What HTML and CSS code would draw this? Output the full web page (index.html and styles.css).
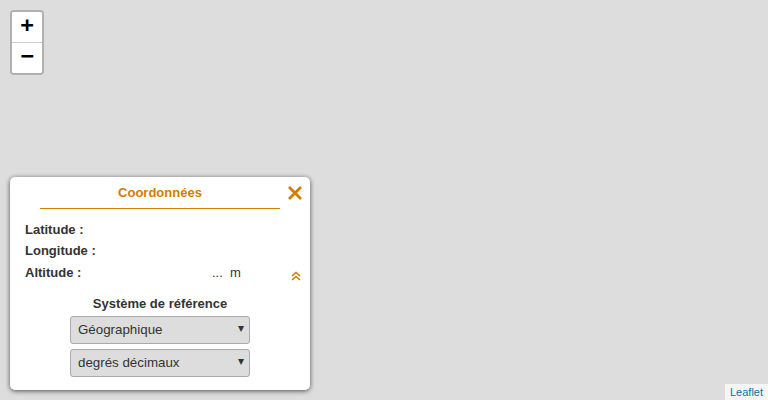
FILE: index.html
```html
<!DOCTYPE html>
<html lang="fr">
<head>
<meta charset="utf-8">
<link rel="stylesheet" href="styles.css">
</head>
<body>
<div class="map">
  <div class="zoom">
    <a class="zbtn zin">+</a>
    <a class="zbtn zout">−</a>
  </div>
  <div class="panel">
    <div class="title">Coordonnées</div>
    <div class="rule"></div>
    <span class="close">
      <svg width="16" height="16" viewBox="0 0 16 16"><path d="M2 2L14 14M14 2L2 14" stroke="#d27c00" stroke-width="2.8" fill="none"/></svg>
    </span>
    <div class="rows">
      <div class="row"><span class="lbl">Latitude :</span></div>
      <div class="row"><span class="lbl">Longitude :</span></div>
      <div class="row alt"><span class="lbl">Altitude :</span><span class="val">...&nbsp; m</span>
        <svg class="chev" width="10" height="10" viewBox="0 0 10 10"><path d="M1 5L5 1.5L9 5M1 9L5 5.5L9 9" stroke="#d27c00" stroke-width="1.6" fill="none"/></svg>
      </div>
    </div>
    <div class="sys">Système de référence</div>
    <div class="sel"><span>Géographique</span><span class="arr">▾</span></div>
    <div class="sel"><span>degrés décimaux</span><span class="arr">▾</span></div>
  </div>
  <div class="attr"><a>Leaflet</a></div>
</div>
</body>
</html>
```
FILE: styles.css
```css
html, body { margin: 0; padding: 0; }
body { font-family: "Liberation Sans", Arial, sans-serif; }
.map { position: relative; width: 768px; height: 400px; background: #ddd; overflow: hidden; }
.zoom {
  position: absolute; left: 10px; top: 10px;
  border: 2px solid rgba(0,0,0,0.2); border-radius: 4px;
  background: #fff; background-clip: padding-box;
  display: flex; flex-direction: column;
}
.zbtn {
  width: 30px; height: 30px; line-height: 30px; text-align: center;
  font: bold 22px "Lucida Console", "DejaVu Sans Mono", monospace; color: #000;
  background: #fff;
}
.zin { border-bottom: 1px solid #ccc; border-radius: 2px 2px 0 0; }
.zout { border-radius: 0 0 2px 2px; }
.panel {
  position: absolute; left: 10px; top: 177px; width: 300px; height: 213px;
  background: #fff; border-radius: 5px; box-shadow: 0 1px 5px rgba(0,0,0,0.65);
  box-sizing: border-box; color: #333; font-size: 13px;
  display: flex; flex-direction: column; align-items: center;
}
.title {
  margin-top: 8px; width: 240px; text-align: center; font-weight: bold; color: #d27c00;
  line-height: 15px;
}
.rule { width: 240px; height: 1px; background: #d27c00; margin-top: 8px; }
.close { position: absolute; right: 7px; top: 8px; width: 16px; height: 16px; }
.close svg { display: block; }
.rows { align-self: stretch; padding: 10px 0 0 15px; }
.row { height: 21.3px; line-height: 21px; font-weight: bold; position: relative; }
.alt .val { position: absolute; left: 187px; font-weight: normal; }
.chev { position: absolute; left: 266px; top: 9px; }
.sys { font-weight: bold; margin-top: 13px; line-height: 15px; }
.sel {
  margin-top: 5px; width: 180px; height: 28px; box-sizing: border-box;
  background: #ddd; border: 1px solid #aaa; border-radius: 3px;
  display: flex; align-items: center; justify-content: space-between;
  padding: 0 5px 0 7px; font-size: 13.33px; color: #333;
}
.sel + .sel { margin-top: 5px; }
.arr { font-size: 12px; margin-top: -3px; }
.attr {
  position: absolute; right: 0; bottom: 0; background: rgba(255,255,255,0.7);
  padding: 0 5px; font-size: 11px; line-height: 16px;
}
.attr a { color: #0078a8; }
```
